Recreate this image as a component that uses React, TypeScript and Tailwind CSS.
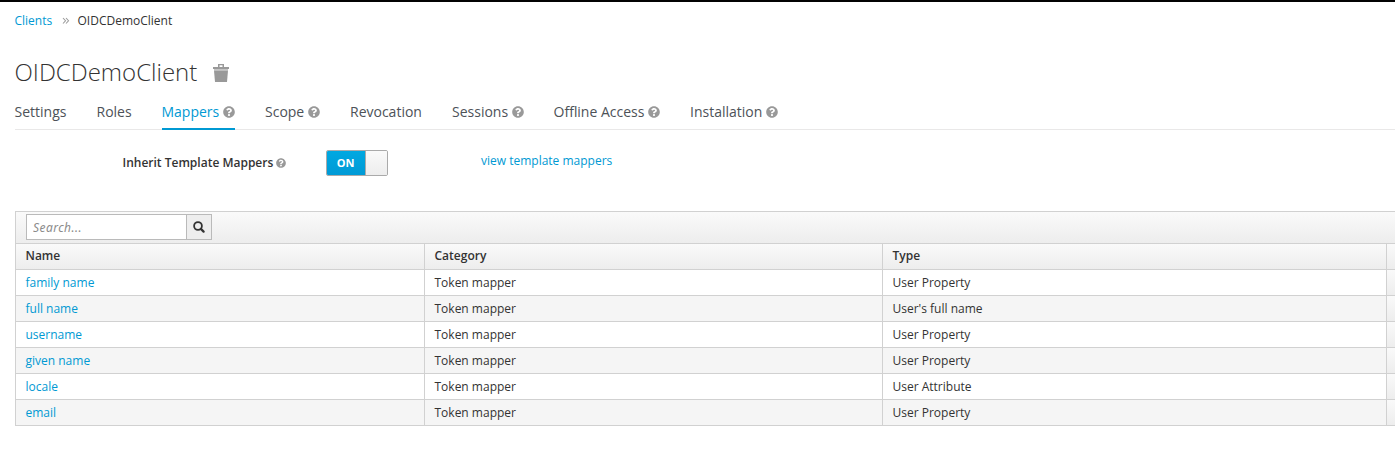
import React from "react";
import { FaQuestionCircle } from "react-icons/fa";

const tabs = [
  { label: "Settings", box: "w-[52px] -indent-[0.5px]" },
  { label: "Roles", box: "w-[35px] -indent-[0.5px]" },
  { label: "Mappers", help: true, active: true, box: "w-[73px] -indent-[0.5px]" },
  { label: "Scope", help: true, box: "w-[55px]" },
  { label: "Revocation", box: "w-[72px]" },
  { label: "Sessions", help: true, box: "w-[72px]" },
  { label: "Offline Access", help: true, box: "w-[106px] -indent-[0.5px]" },
  { label: "Installation", help: true, box: "w-[88px]" },
];

const mappers = [
  ["family name", "User Property"],
  ["full name", "User's full name"],
  ["username", "User Property"],
  ["given name", "User Property"],
  ["locale", "User Attribute"],
  ["email", "User Property"],
];

const columns = "grid grid-cols-[409px_458px_504px_1fr] grid-rows-[25px]";

function TrashIcon() {
  return (
    <svg className="mt-[2px]" width="16" height="18" viewBox="0 0 16 18" fill="#999999">
      <path fillRule="evenodd" d="M5 0h6v3h5v2H0V3h5V0zm1.5 1.2V3h3V1.2h-3z" />
      <path d="M1 5h14v1.5H1z" fill="#c4c4c4" />
      <path d="M1 6.5h14l-1 11.5H2L1 6.5z" />
    </svg>
  );
}

function DoubleAngleIcon() {
  return (
    <svg className="ml-[9px] mr-[7px]" width="9" height="9" viewBox="0 0 9 9" fill="none" stroke="#9c9c9c" strokeWidth="1.1">
      <path d="M1 2l2.5 2.75L1 7.5M4 2l2.5 2.75L4 7.5" />
    </svg>
  );
}

function SearchIcon() {
  return (
    <svg className="-ml-px" width="12" height="12" viewBox="0 0 12 12" fill="none" stroke="#333333">
      <circle cx="5" cy="5" r="3.9" strokeWidth="1.8" />
      <path d="M7.9 7.9l2.7 2.7" strokeWidth="2.2" strokeLinecap="round" />
    </svg>
  );
}

export default function App() {
  return (
    <div className="h-[464px] w-full overflow-hidden border-t-2 border-[#030303] bg-white pl-[15px] font-['Open_Sans',sans-serif] text-[12px] leading-[20px] text-[#333333]">
      <nav className="-ml-[0.5px] flex h-[37px] items-center">
        <a className="w-[38px] text-[#0099d3]">Clients</a>
        <DoubleAngleIcon />
        <span>OIDCDemoClient</span>
      </nav>
      <header className="-ml-[0.5px] flex h-[66px] items-center">
        <h1 className="w-[198.5px] text-[24px] font-light leading-[26px]">OIDCDemoClient</h1>
        <TrashIcon />
      </header>
      <ul className="flex h-[25px] gap-[30px] border-b border-[#e9e8e8] text-[14px] text-[#4d5258]">
        {tabs.map((t) => (
          <li
            key={t.label}
            className={`flex h-[25px] shrink-0 items-start justify-between whitespace-nowrap leading-[14px] ${t.box} ${t.active ? "border-b-2 border-[#0099d3] text-[#0099d3]" : ""}`}
          >
            <span>{t.label}</span>
            {t.help && <FaQuestionCircle className="mt-px size-[12px] shrink-0 text-[#999999]" />}
          </li>
        ))}
      </ul>
      <div className="flex h-[81px] items-start pt-[20px]">
        <div className="ml-[107.5px] flex h-[26px] w-[203.5px] items-center font-semibold">
          <span>Inherit Template Mappers</span>
          <FaQuestionCircle className="ml-[2.5px] size-[10px] text-[#999999]" />
        </div>
        <div className="flex h-[26px] w-[62px] overflow-hidden rounded-[2px] border border-[#aaaaaa]">
          <span className="flex w-[38px] items-center justify-center bg-linear-to-b from-[#00a8e1] to-[#009ad6] pr-px text-[11px] font-bold text-white">
            ON
          </span>
          <span className="flex-1 border-l border-[#aaaaaa] bg-linear-to-b from-[#fafafa] to-[#ededed]" />
        </div>
        <a className="ml-[93px] pt-px text-[#0099d3]">view template mappers</a>
      </div>
      <section className="border-l border-t border-[#d1d1d1]">
        <div className="flex h-[32px] items-start border-b border-[#d1d1d1] bg-linear-to-b from-[#fafafa] to-[#ededed] pl-[10px] pt-[2px]">
          <input
            className="h-[26px] w-[160px] border border-r-0 border-[#bababa] bg-white px-[6px] font-['Noto_Sans',sans-serif] outline-none placeholder:italic placeholder:tracking-[0.45px] placeholder:text-[#8b8b8b] placeholder:opacity-100"
            placeholder="Search..."
          />
          <button className="flex h-[26px] w-[26px] items-center justify-center border border-[#bababa] bg-[#eeeeee]">
            <SearchIcon />
          </button>
        </div>
        <div className={`${columns} h-[26px] border-b border-[#d1d1d1] bg-linear-to-b from-[#fafafa] to-[#ededed] font-semibold leading-[24px]`}>
          <span className="border-r border-[#d1d1d1] pl-[9.5px]">Name</span>
          <span className="border-r border-[#d1d1d1] pl-[9.5px]">Category</span>
          <span className="border-r border-[#d1d1d1] pl-[9.5px]">Type</span>
          <span />
        </div>
        <div>
          {mappers.map(([name, type]) => (
            <div key={name} className={`${columns} h-[26px] border-b border-[#d1d1d1] leading-[26px] odd:bg-white even:bg-[#f5f5f5]`}>
              <a className="border-r border-[#d1d1d1] pl-[9.5px] text-[#0099d3]">{name}</a>
              <span className="border-r border-[#d1d1d1] pl-[9.5px]">Token mapper</span>
              <span className="border-r border-[#d1d1d1] pl-[9.5px]">{type}</span>
              <span className="bg-linear-to-b from-[#fafafa] to-[#ededed]" />
            </div>
          ))}
        </div>
      </section>
    </div>
  );
}
